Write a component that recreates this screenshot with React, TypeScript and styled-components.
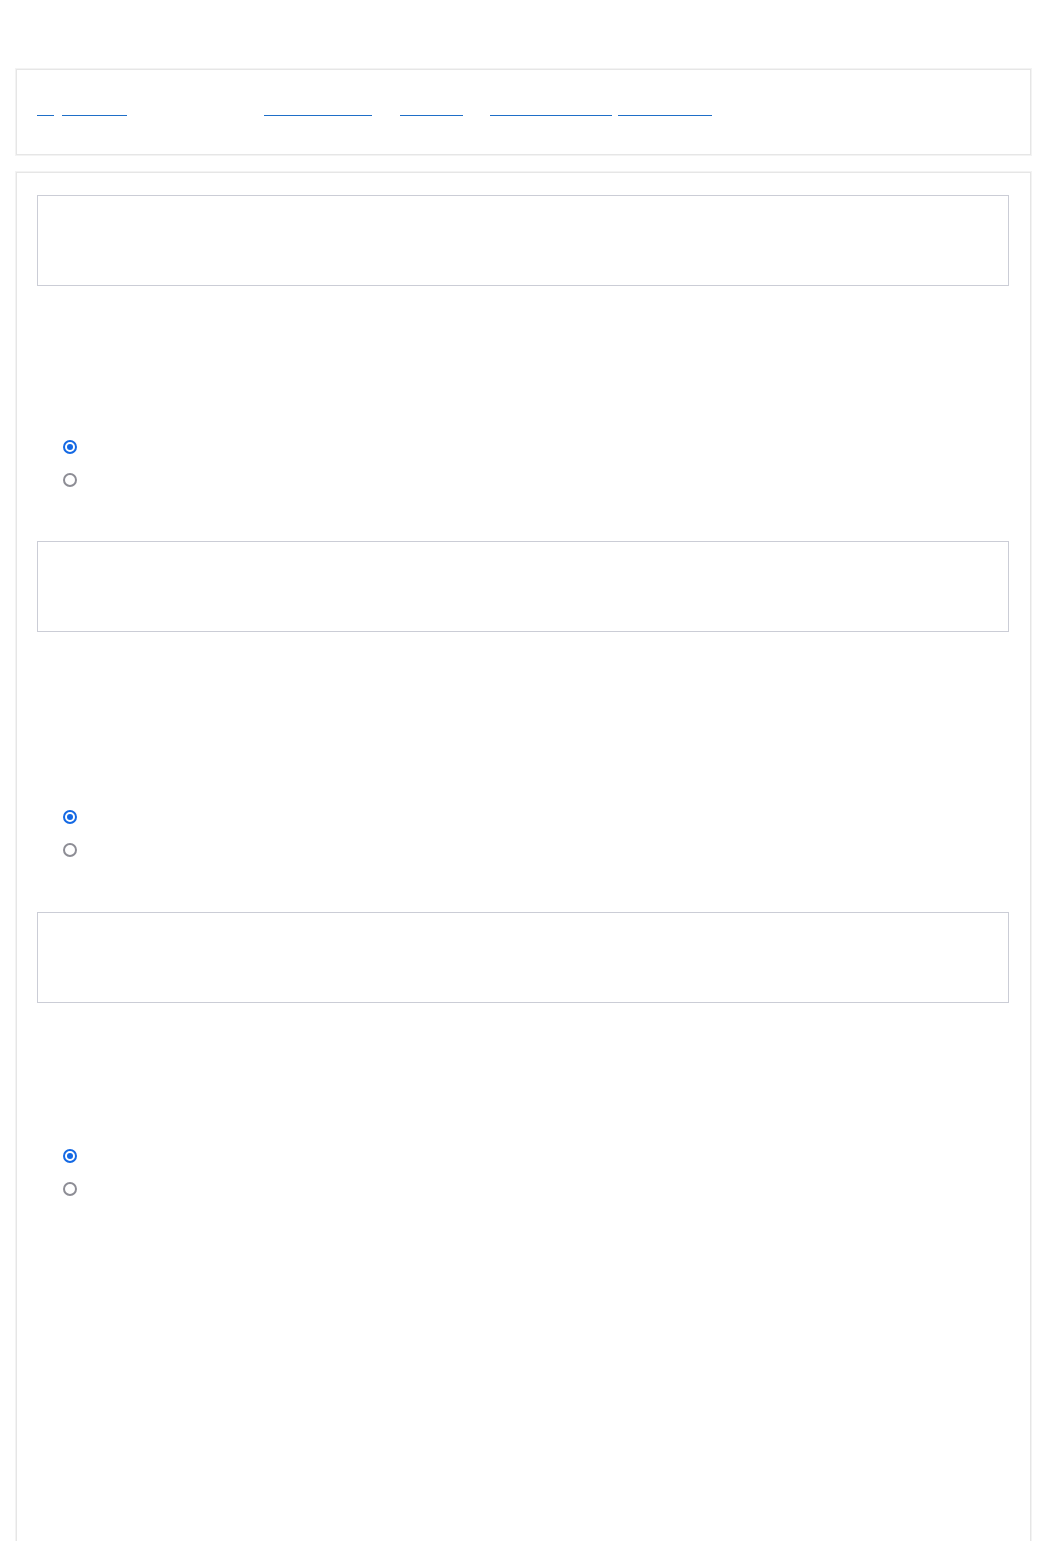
import React from "react";
import styled, { createGlobalStyle } from "styled-components";

const Global = createGlobalStyle`
  html, body { margin: 0; padding: 0; background: #ffffff; }
  body { font-family: "Liberation Sans", Arial, sans-serif; font-size: 14px; color: #222; }
  * { box-sizing: border-box; }
`;

const Page = styled.div`
  padding: 69px 16px 0 16px;
  display: flex;
  flex-direction: column;
  gap: 17px;
`;

const HeaderCard = styled.header`
  border: 1px solid #e6e6e6;
  box-shadow: 0 0 0 1px #f3f3f3;
  padding: 30px 20px 38px 20px;
  background: #fff;
`;

const Nav = styled.nav`
  display: flex;
  align-items: flex-start;
  height: 16px;
`;

const NavLink = styled.a<{ $w: number; $before: number }>`
  display: block;
  width: ${(p) => p.$w}px;
  margin-left: ${(p) => p.$before}px;
  height: 16px;
  border-bottom: 1px solid #1f6fc8;
  color: transparent;
  font-size: 12px;
  line-height: 15px;
  overflow: hidden;
  white-space: nowrap;
  text-decoration: none;
`;

const MainCard = styled.main`
  border: 1px solid #e6e6e6;
  border-bottom: none;
  box-shadow: 0 0 0 1px #f3f3f3;
  padding: 22px 21px 340px 20px;
  background: #fff;
`;

const Section = styled.section`
  display: flex;
  flex-direction: column;
  margin-bottom: 45px;
  &:nth-child(2) { margin-bottom: 46px; }
`;

const PromptBox = styled.div`
  height: 91px;
  border: 1px solid #cbcdd6;
  background: #fff;
`;

const Question = styled.div<{ $h: number }>`
  height: ${(p) => p.$h}px;
  color: transparent;
  padding-top: 40px;
  font-size: 15px;
`;

const Options = styled.div`
  display: flex;
  flex-direction: column;
  padding-left: 26px;
`;

const OptionRow = styled.label`
  display: flex;
  align-items: center;
  gap: 10px;
  height: 33px;
  color: transparent;
`;

const Radio = styled.input.attrs({ type: "radio" })`
  appearance: none;
  -webkit-appearance: none;
  margin: 0;
  width: 14px;
  height: 14px;
  border-radius: 50%;
  border: 2px solid #8d8d95;
  background: #fff;
  display: grid;
  place-items: center;
  &:checked {
    border: 2px solid #1469e4;
  }
  &:checked::after {
    content: "";
    width: 6px;
    height: 6px;
    border-radius: 50%;
    background: #1469e4;
  }
`;

const links = [
  { w: 17, before: 0, t: "«" },
  { w: 65, before: 8, t: "Back" },
  { w: 108, before: 137, t: "Question list" },
  { w: 63, before: 28, t: "Help" },
  { w: 122, before: 27, t: "Previous question" },
  { w: 94, before: 6, t: "Next question" },
];

const sections = [
  { lead: 144, name: "q1" },
  { lead: 168, name: "q2" },
  { lead: 136, name: "q3" },
];

export default function App() {
  return (
    <>
      <Global />
      <Page>
        <HeaderCard>
          <Nav>
            {links.map((l, i) => (
              <NavLink key={i} href="#" $w={l.w} $before={l.before}>
                {l.t}
              </NavLink>
            ))}
          </Nav>
        </HeaderCard>
        <MainCard>
          {sections.map((s) => (
            <Section key={s.name}>
              <PromptBox />
              <Question $h={s.lead}>Question</Question>
              <Options>
                <OptionRow>
                  <Radio name={s.name} defaultChecked />
                  Yes
                </OptionRow>
                <OptionRow>
                  <Radio name={s.name} />
                  No
                </OptionRow>
              </Options>
            </Section>
          ))}
        </MainCard>
      </Page>
    </>
  );
}
